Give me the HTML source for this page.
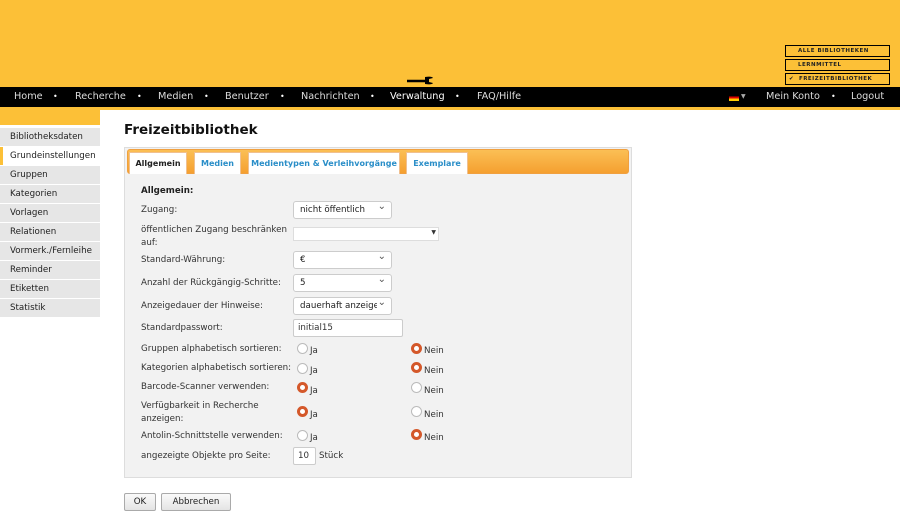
<!DOCTYPE html>
<html><head><meta charset="utf-8"><style>
*{box-sizing:border-box;margin:0;padding:0}
body{width:900px;height:515px;overflow:hidden;background:#fff;font-family:"DejaVu Sans","Liberation Sans",sans-serif;font-size:8.7px;color:#333;position:relative}
.a{position:absolute;white-space:nowrap}
#hdr{left:0;top:0;width:900px;height:87px;background:#fcc037}
#nav{left:0;top:87px;width:900px;height:20px;background:#000;color:#ddd;font-size:9.7px}
#nav span{position:absolute;top:4px}
.dot{font-size:8px;top:5px!important;color:#fff}
.lib{left:785px;width:105px;height:12px;border:1px solid #000;font-size:5.5px;font-weight:bold;letter-spacing:.5px;line-height:10px;padding-left:12px;color:#222}
.side{left:0;width:100px;height:18px;background:#e6e6e6;padding-left:10px;line-height:18px;font-size:8.7px;color:#222}
.lbl{left:141px;font-size:8.7px;color:#333}
.sel{left:293px;width:99px;height:18px;background:#fff;border:1px solid #ccc;border-radius:3px;font-size:8.7px;padding:3px 6px;color:#222;overflow:hidden}
.sel:after{content:"⌄";position:absolute;right:5px;top:-1px;font-size:10px;color:#555;background:#fff;padding-left:1px}
.r{width:11px;height:11px;border-radius:50%;border:1px solid #bbb;background:#fff}
.r.on{border:3px solid #d4582a;background:#fff}
.rt{font-size:8.7px}
.tab{top:152px;height:22px;background:#fff;border:1px solid #f0c090;border-bottom:none;font-weight:bold;font-size:8px;color:#2a8ec8;line-height:21px;text-align:center}
.btn{top:493px;height:18px;border:1px solid #aaa;border-radius:2px;background:linear-gradient(#fafafa,#e4e4e4);font-size:8.7px;text-align:center;line-height:16px;color:#222}
</style></head><body>
<div id="hdr" class="a"></div>
<div class="a lib" style="top:45px">ALLE BIBLIOTHEKEN</div>
<div class="a lib" style="top:59px">LERNMITTEL</div>
<div class="a lib" style="top:73px;padding-left:3px">✔ &nbsp;FREIZEITBIBLIOTHEK</div>
<svg class="a" style="left:405px;top:73px" width="30" height="12"><path d="M2 8 H20" stroke="#000" stroke-width="2.5"/><path d="M20 4 Q27 3 28 5 L24 6 L24 9 L28 10 Q27 12 20 11 Z" fill="#000"/></svg>
<div id="nav" class="a">
<span style="left:14px">Home</span><span class="dot" style="left:53px">•</span>
<span style="left:75px">Recherche</span><span class="dot" style="left:137px">•</span>
<span style="left:158px">Medien</span><span class="dot" style="left:204px">•</span>
<span style="left:225px">Benutzer</span><span class="dot" style="left:280px">•</span>
<span style="left:301px">Nachrichten</span><span class="dot" style="left:370px">•</span>
<span style="left:390px;color:#fff">Verwaltung</span><span class="dot" style="left:455px">•</span>
<span style="left:477px">FAQ/Hilfe</span>
<span style="left:729px;top:7px;width:10px;height:7px;background:linear-gradient(#000 33%,#d00 33% 66%,#fc0 66%)"></span>
<span style="left:741px;top:6px;font-size:6px;color:#aaa">▼</span>
<span style="left:766px">Mein Konto</span><span class="dot" style="left:831px">•</span>
<span style="left:851px">Logout</span>
</div>
<div class="a" style="left:412px;top:105px;width:0;height:0;border:4px solid transparent;border-top-color:#000"></div>
<div class="a" style="left:0;top:107px;width:900px;height:3px;background:#fcc037"></div>
<div class="a" style="left:0;top:107px;width:100px;height:18px;background:#fcc037"></div>
<div class="a side" style="top:128px">Bibliotheksdaten</div>
<div class="a side" style="top:147px;background:#fff;border-left:3px solid #fcc037;padding-left:7px">Grundeinstellungen</div>
<div class="a side" style="top:166px">Gruppen</div>
<div class="a side" style="top:185px">Kategorien</div>
<div class="a side" style="top:204px">Vorlagen</div>
<div class="a side" style="top:223px">Relationen</div>
<div class="a side" style="top:242px">Vormerk./Fernleihe</div>
<div class="a side" style="top:261px">Reminder</div>
<div class="a side" style="top:280px">Etiketten</div>
<div class="a side" style="top:299px">Statistik</div>
<div class="a" style="left:124px;top:122px;font-size:13.5px;font-weight:bold;color:#111">Freizeitbibliothek</div>
<div class="a" style="left:124px;top:147px;width:508px;height:331px;background:#f2f2f2;border:1px solid #ddd"></div>
<div class="a" style="left:127px;top:149px;width:502px;height:25px;background:linear-gradient(#fbbf55,#f5a030);border:1px solid #f0a040;border-radius:3px"></div>
<div class="a tab" style="left:129px;width:58px;color:#222">Allgemein</div>
<div class="a tab" style="left:194px;width:47px">Medien</div>
<div class="a tab" style="left:248px;width:152px">Medientypen &amp; Verleihvorgänge</div>
<div class="a tab" style="left:406px;width:62px">Exemplare</div>
<div class="a lbl" style="top:186px;font-weight:bold;color:#222">Allgemein:</div>
<div class="a lbl" style="top:205px">Zugang:</div>
<div class="a sel" style="top:201px">nicht öffentlich</div>
<div class="a lbl" style="top:224px;line-height:13px">öffentlichen Zugang beschränken<br>auf:</div>
<div class="a" style="left:293px;top:227px;width:146px;height:14px;background:#fff;border:1px solid #ddd"><span class="a" style="right:2px;top:1px;font-size:6px">▼</span></div>
<div class="a lbl" style="top:255px">Standard-Währung:</div>
<div class="a sel" style="top:251px">€</div>
<div class="a lbl" style="top:278px">Anzahl der Rückgängig-Schritte:</div>
<div class="a sel" style="top:274px">5</div>
<div class="a lbl" style="top:301px">Anzeigedauer der Hinweise:</div>
<div class="a sel" style="top:297px">dauerhaft anzeigen</div>
<div class="a lbl" style="top:323px">Standardpasswort:</div>
<div class="a" style="left:293px;top:319px;width:110px;height:18px;background:#fff;border:1px solid #ccc;border-radius:2px;font-size:8.7px;padding:3px 4px">initial15</div>
<div class="a lbl" style="top:344px">Gruppen alphabetisch sortieren:</div>
<div class="a lbl" style="top:363px">Kategorien alphabetisch sortieren:</div>
<div class="a lbl" style="top:382px">Barcode-Scanner verwenden:</div>
<div class="a lbl" style="top:400px;line-height:13px">Verfügbarkeit in Recherche<br>anzeigen:</div>
<div class="a lbl" style="top:431px">Antolin-Schnittstelle verwenden:</div>
<div class="a lbl" style="top:451px">angezeigte Objekte pro Seite:</div>
<div class="a r" style="left:297px;top:343px"></div><div class="a rt" style="left:310px;top:346px">Ja</div>
<div class="a r on" style="left:411px;top:343px"></div><div class="a rt" style="left:424px;top:346px">Nein</div>
<div class="a r" style="left:297px;top:363px"></div><div class="a rt" style="left:310px;top:366px">Ja</div>
<div class="a r on" style="left:411px;top:362px"></div><div class="a rt" style="left:424px;top:366px">Nein</div>
<div class="a r on" style="left:297px;top:382px"></div><div class="a rt" style="left:310px;top:386px">Ja</div>
<div class="a r" style="left:411px;top:382px"></div><div class="a rt" style="left:424px;top:386px">Nein</div>
<div class="a r on" style="left:297px;top:406px"></div><div class="a rt" style="left:310px;top:410px">Ja</div>
<div class="a r" style="left:411px;top:406px"></div><div class="a rt" style="left:424px;top:410px">Nein</div>
<div class="a r" style="left:297px;top:430px"></div><div class="a rt" style="left:310px;top:433px">Ja</div>
<div class="a r on" style="left:411px;top:429px"></div><div class="a rt" style="left:424px;top:433px">Nein</div>
<div class="a" style="left:293px;top:447px;width:23px;height:18px;background:#fff;border:1px solid #ccc;border-radius:2px;font-size:8.7px;padding:3px 4px">10</div>
<div class="a rt" style="left:319px;top:451px">Stück</div>
<div class="a btn" style="left:124px;width:32px">OK</div>
<div class="a btn" style="left:161px;width:70px">Abbrechen</div>
</body></html>
